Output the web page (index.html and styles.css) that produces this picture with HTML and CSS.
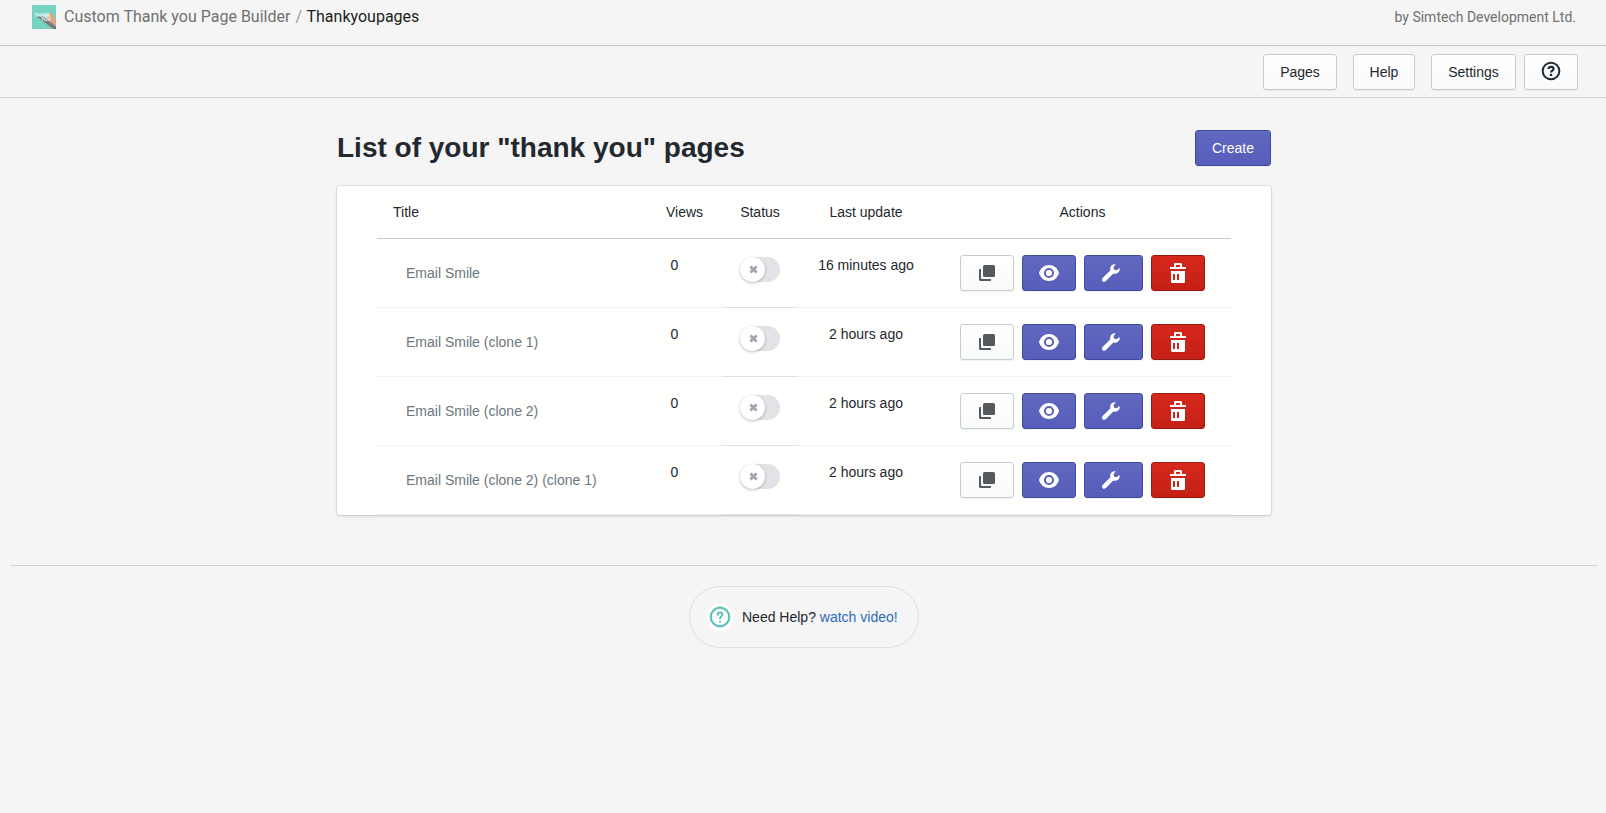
FILE: index.html
```html
<!DOCTYPE html>
<html lang="en">
<head>
<meta charset="utf-8">
<title>Custom Thank you Page Builder</title>
<link rel="stylesheet" href="styles.css">
</head>
<body>
<svg class="defs" width="0" height="0" aria-hidden="true">
  <symbol id="copy" viewBox="0 0 16 16"><rect x="4" y="0" width="12" height="12" rx="1.5"/><path d="M0 5c0-.8.4-1 1-1h1v9.200c0 .5.3.8.8.8H12v1c0 .6-.3 1-1 1H1.500C.6 16 0 15.400 0 14.500z"/></symbol>
  <symbol id="eye" viewBox="0 0 20 16"><path d="M10 0C5.200 0 1.500 3 0 8c1.500 5 5.200 8 10 8s8.500-3 10-8c-1.500-5-5.200-8-10-8z"/><circle class="eye-ring" cx="10" cy="8" r="4.100"/></symbol>
  <symbol id="wrench" viewBox="0 0 19 19"><path d="M14.500.3C12 -.4 9.100 1.200 8.700 4.200c-.1.900 0 1.700.2 2.400L.9 14.600c-1.100 1-1.200 2.500-.3 3.500s2.500 1 3.500-.1l7.900-8c3.400 1 6.500-1.300 6.700-4.300 0-.5-.1-1-.2-1.400l-3.100 2.400-2.600-.7-.7-2.600z"/></symbol>
  <symbol id="trash" viewBox="0 0 16 20"><path fill-rule="evenodd" d="M4 4V1.500C4 .6 4.600 0 5.500 0h5c.9 0 1.500.6 1.500 1.500V4h4v2H0V4zM6 4h4V2H6zM1 8h14v10.500c0 .9-.6 1.500-1.500 1.500h-11C1.600 20 1 19.400 1 18.500zm2 3v6h2v-6zm4 0v6h2v-6z"/></symbol>
</svg>

<header class="topbar">
  <div class="crumbs">
    <svg class="logo" viewBox="0 0 24 24"><path fill="#76d2c1" d="M0 0h24v24H0z"/><path fill="#65716f" d="M4 11l11 1 9 9v3h-3z"/><path d="M7 13l15 11M9 12l14 10" stroke="#a2aaa7" stroke-width=".7"/><path fill="#dda183" d="M15 10l4-2.500 2 2 3 6v6l-8-6-4-3 4 .5z"/><text x="2.500" y="11.500">THANK</text><text x="9" y="15.500">YOU</text></svg>
    <span class="app">Custom Thank you Page Builder</span><span class="slash">/</span><span class="current">Thankyoupages</span>
  </div>
  <div class="author">by Simtech Development Ltd.</div>
</header>

<nav class="toolbar">
  <button class="btn pages">Pages</button>
  <button class="btn help">Help</button>
  <button class="btn settings">Settings</button>
  <button class="btn icon question"><svg width="20" height="20" viewBox="0 0 20 20" fill="none" stroke="#212b36"><circle cx="10" cy="10" r="8.300" stroke-width="2"/><path d="M7.400 8.100c0-3 5.200-3 5.200 0 0 1.600-2.600 1.600-2.600 3.500" stroke-width="2.200"/><path d="M10 12.800V15" stroke-width="2.300"/></svg></button>
</nav>

<main class="content">
  <div class="heading">
    <h1>List of your "thank you" pages</h1>
    <button class="btn primary create">Create</button>
  </div>
  <section class="card">
    <div class="row head">
      <div class="title">Title</div><div class="views-head">Views</div><div>Status</div><div>Last update</div><div>Actions</div>
    </div>
    <div class="row">
      <div class="name">Email Smile</div><div class="views">0</div>
      <div class="status"><span class="toggle"><span class="knob"><svg width="9" height="9" viewBox="0 0 9 9"><path d="M1.400 1.400l6.200 6.200M7.600 1.400L1.400 7.600"/></svg></span></span></div>
      <div class="updated">16 minutes ago</div>
      <div class="actions"><button class="btn icon"><svg width="16" height="16"><use href="#copy"/></svg></button><button class="btn icon primary"><svg width="20" height="16"><use href="#eye"/></svg></button><button class="btn icon primary wide"><svg width="18" height="18"><use href="#wrench"/></svg></button><button class="btn icon danger"><svg width="16" height="20"><use href="#trash"/></svg></button></div>
    </div>
    <div class="row">
      <div class="name">Email Smile (clone 1)</div><div class="views">0</div>
      <div class="status"><span class="toggle"><span class="knob"><svg width="9" height="9" viewBox="0 0 9 9"><path d="M1.400 1.400l6.200 6.200M7.600 1.400L1.400 7.600"/></svg></span></span></div>
      <div class="updated">2 hours ago</div>
      <div class="actions"><button class="btn icon"><svg width="16" height="16"><use href="#copy"/></svg></button><button class="btn icon primary"><svg width="20" height="16"><use href="#eye"/></svg></button><button class="btn icon primary wide"><svg width="18" height="18"><use href="#wrench"/></svg></button><button class="btn icon danger"><svg width="16" height="20"><use href="#trash"/></svg></button></div>
    </div>
    <div class="row">
      <div class="name">Email Smile (clone 2)</div><div class="views">0</div>
      <div class="status"><span class="toggle"><span class="knob"><svg width="9" height="9" viewBox="0 0 9 9"><path d="M1.400 1.400l6.200 6.200M7.600 1.400L1.400 7.600"/></svg></span></span></div>
      <div class="updated">2 hours ago</div>
      <div class="actions"><button class="btn icon"><svg width="16" height="16"><use href="#copy"/></svg></button><button class="btn icon primary"><svg width="20" height="16"><use href="#eye"/></svg></button><button class="btn icon primary wide"><svg width="18" height="18"><use href="#wrench"/></svg></button><button class="btn icon danger"><svg width="16" height="20"><use href="#trash"/></svg></button></div>
    </div>
    <div class="row">
      <div class="name">Email Smile (clone 2) (clone 1)</div><div class="views">0</div>
      <div class="status"><span class="toggle"><span class="knob"><svg width="9" height="9" viewBox="0 0 9 9"><path d="M1.400 1.400l6.200 6.200M7.600 1.400L1.400 7.600"/></svg></span></span></div>
      <div class="updated">2 hours ago</div>
      <div class="actions"><button class="btn icon"><svg width="16" height="16"><use href="#copy"/></svg></button><button class="btn icon primary"><svg width="20" height="16"><use href="#eye"/></svg></button><button class="btn icon primary wide"><svg width="18" height="18"><use href="#wrench"/></svg></button><button class="btn icon danger"><svg width="16" height="20"><use href="#trash"/></svg></button></div>
    </div>
  </section>
</main>

<footer class="footer">
  <div class="pill">
    <svg width="28" height="28" viewBox="0 0 28 28" fill="none" stroke="#5dc1b8"><circle cx="14" cy="14" r="13.500" fill="#fff" stroke="none"/><circle cx="14" cy="14" r="9.300" stroke-width="2.200"/><path d="M11.700 11.800c0-3.200 4.800-3.100 4.800-.2 0 1.800-2.400 1.600-2.400 3.900" stroke-width="2" stroke-linecap="round"/><path d="M14 18v1.800" stroke-width="2"/></svg>
    <span>Need Help? <a href="#">watch video!</a></span>
  </div>
</footer>
</body>
</html>
```
FILE: styles.css
```css
* { box-sizing: border-box; }
body { margin: 0; background: #f5f5f5; color: #23282f; font: 14px/20px "Liberation Sans", Arial, sans-serif; }
.defs { display: block; }

.topbar { display: flex; justify-content: space-between; height: 46px; padding: 5px 30px 0 32px; border-bottom: 1px solid #c8c9ca; font-family: Roboto, sans-serif; color: #6f7172; }
.crumbs { display: flex; align-items: center; height: 24px; font-size: 16px; }
.logo { width: 24px; height: 24px; margin-right: 8px; }
.logo text { font: bold 4.500px "Liberation Sans", sans-serif; fill: #effffb; }
.slash { margin: 0 4.500px 0 5px; color: #999; }
.current { color: #1c1e20; }
.author { font-size: 14px; line-height: 24px; }

.toolbar { display: flex; justify-content: flex-end; height: 52px; padding: 8px 28px 0 0; border-bottom: 1px solid #d0d3d5; }
.btn { display: flex; align-items: center; justify-content: center; height: 36px; padding: 0; border: 1px solid #c4cdd2; border-radius: 3px; background: linear-gradient(#fff, #f9fafa); box-shadow: 0 1px 0 rgba(22, 29, 37, .05); color: #23282f; font: 14px/16px "Liberation Sans", Arial, sans-serif; }
.pages { width: 74px; margin-right: 16px; }
.help { width: 62px; margin-right: 16px; }
.settings { width: 85px; margin-right: 8px; }
.icon { width: 54px; fill: #55595d; }
.question { padding-bottom: 2px; }
.primary { border-color: #3f4a9c; background: linear-gradient(#6068c0, #575dba); color: #fff; fill: #fff; }
.danger { border-color: #98190f; background: linear-gradient(#d5281c, #c52016); fill: #fff; }
.wide { width: 59px; }
.wide svg { margin-right: 5px; }
.create { width: 76px; }
.eye-ring { fill: #fff; stroke: #5b62bd; stroke-width: 2; }

.content { width: 934px; margin: 32px 0 0 337px; }
.heading { display: flex; justify-content: space-between; align-items: center; height: 36px; }
h1 { margin: 0; font-size: 28px; line-height: 36px; }
.card { height: 329px; margin-top: 20px; padding: 0 40px; border-radius: 3px; background: #fffffe; box-shadow: 0 0 0 1px rgba(63, 63, 68, .08), 0 1px 3px rgba(63, 63, 68, .2); }
.row { display: grid; grid-template-columns: 273px 72px 76px 136px 297px; height: 69px; }
.row > div { border-bottom: 1px solid #f3f4f4; }
.row > .status { border-color: #dfe3e6; }
.head { height: 53px; text-align: center; line-height: 52px; }
.head > div { border-color: #c4cbcf; }
.head .title { padding-left: 16px; text-align: left; }
.views-head { padding-right: 3px; }
.name { padding: 24px 0 0 29px; color: #6b7780; }
.views { padding: 16px 0 0 20.500px; }
.status { padding: 18px 0 0 18px; }
.updated { padding-top: 16px; text-align: center; }
.actions { display: flex; gap: 8px; padding: 16px 0 0 26px; }
.toggle { display: block; width: 40px; height: 25px; border-radius: 13px; background: #e1e3e7; }
.knob { display: flex; align-items: center; justify-content: center; width: 25px; height: 25px; padding-left: 1px; border-radius: 50%; background: #fff; box-shadow: 0 1px 3px rgba(33, 43, 54, .3); }
.knob path { stroke: #9fa4ad; stroke-width: 2.800; }

.footer { display: flex; justify-content: center; margin: 50px 8px 0 10px; padding-top: 20px; border-top: 1px solid #d2d4d5; }
.pill { display: flex; align-items: center; width: 230px; height: 62px; padding-left: 16px; border: 1px solid #dedfe3; border-radius: 31px; }
.pill svg { margin-right: 8px; }
.pill a { color: #2a6cb5; text-decoration: none; }
```
